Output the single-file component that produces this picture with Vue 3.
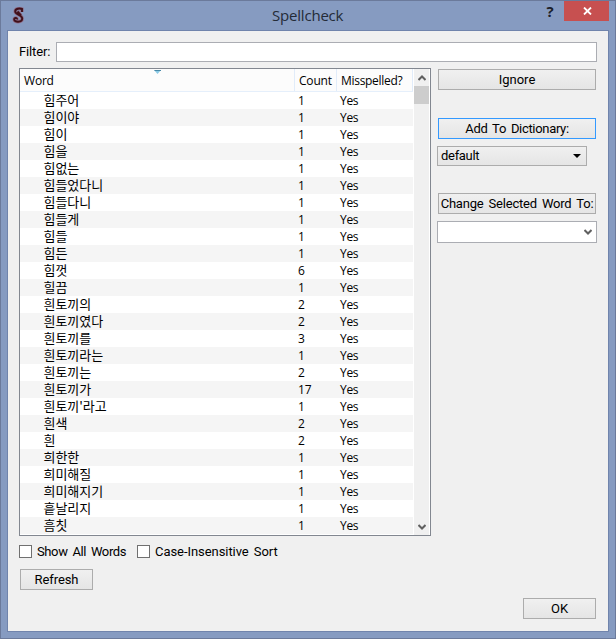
<script setup>
const rows = [
  ['힘주어', 1], ['힘이야', 1], ['힘이', 1], ['힘을', 1], ['힘없는', 1],
  ['힘들었다니', 1], ['힘들다니', 1], ['힘들게', 1], ['힘들', 1], ['힘든', 1],
  ['힘껏', 6], ['힐끔', 1], ['흰토끼의', 2], ['흰토끼였다', 2], ['흰토끼를', 3],
  ['흰토끼라는', 1], ['흰토끼는', 2], ['흰토끼가', 17], ["흰토끼'라고", 1], ['흰색', 2],
  ['흰', 2], ['희한한', 1], ['희미해질', 1], ['희미해지기', 1], ['흩날리지', 1], ['흠칫', 1],
]
</script>

<template>
  <div class="window">
    <header class="titlebar">
      <svg class="logo" width="14" height="17" viewBox="0 0 14 17">
        <path d="M10 5V2C8 1.200 3.200 1.200 3.200 4.500c0 3.200 7 3 7 7 0 4.300-8 4-8 .9 0-2 3.200-1.900 2.900.1M5.500 4.500l3.500 3.800" fill="none" stroke="#8c6c88" stroke-width="3.400" />
        <path d="M10 5V2C8 1.200 3.200 1.200 3.200 4.500c0 3.200 7 3 7 7 0 4.300-8 4-8 .9 0-2 3.200-1.900 2.900.1M5.500 4.500l3.500 3.800" fill="none" stroke="#40101a" stroke-width="1.900" />
      </svg>
      <h1 class="title">Spellcheck</h1>
      <span class="help">?</span>
      <button class="close" aria-label="Close">
        <svg width="9" height="8" viewBox="0 0 9 8"><path d="M1 .5l7 7M8 .5l-7 7" stroke="#fff" stroke-width="1.800" /></svg>
      </button>
    </header>

    <main class="client">
      <div class="filter">
        <label class="filter-label">Filter:</label>
        <input class="filter-input" type="text" />
      </div>

      <div class="body">
        <div class="table">
          <div class="grid">
            <div class="head">
              <span class="h-word">Word
                <svg class="sort" width="7" height="4" viewBox="0 0 7 4"><path d="M0 0h7L3.500 4z" fill="#8ccbe6" /><path d="M0 0h7v1H1z" fill="#4789a8" /></svg>
              </span>
              <span class="h-count">Count</span>
              <span class="h-miss">Misspelled?</span>
            </div>
            <div v-for="[word, count] in rows" :key="word" class="row">
              <span class="word">{{ word }}</span>
              <span class="count">{{ count }}</span>
              <span class="miss">Yes</span>
            </div>
          </div>
          <div class="scroll">
            <svg class="up" width="8" height="6" viewBox="0 0 8 6"><path d="M.5 5L4 1.500 7.500 5" fill="none" stroke="#606060" stroke-width="2" /></svg>
            <div class="thumb"></div>
            <svg class="down" width="8" height="6" viewBox="0 0 8 6"><path d="M.5 1L4 4.500 7.500 1" fill="none" stroke="#606060" stroke-width="2" /></svg>
          </div>
        </div>

        <aside class="side">
          <button class="btn ignore">Ignore</button>
          <button class="btn add">Add To Dictionary:</button>
          <div class="combo">
            <span class="default">default</span>
            <svg width="8" height="4" viewBox="0 0 8 4"><path d="M0 0h8L4 4z" fill="#000" /></svg>
          </div>
          <button class="btn change">Change Selected Word To:</button>
          <div class="edit">
            <svg width="8" height="6" viewBox="0 0 8 6"><path d="M.5 1L4 4.500 7.500 1" fill="none" stroke="#606060" stroke-width="2" /></svg>
          </div>
        </aside>
      </div>

      <div class="checks">
        <i class="box"></i><span class="show">Show All Words</span>
        <i class="box"></i><span class="case">Case-Insensitive Sort</span>
      </div>
      <button class="btn refresh">Refresh</button>
      <button class="btn ok">OK</button>
    </main>
  </div>
</template>

<style>
body { margin: 0; overflow: hidden; }
</style>

<style scoped>
* { box-sizing: border-box; }
.window {
  width: 616px; height: 639px; padding: 0 6px 6px; background: #869bc1;
  border: 1px solid #6b7a9b; color: #000;
  font: 13px/16px Roboto, "Noto Sans CJK KR", sans-serif;
  white-space: nowrap;
}
.titlebar { display: flex; height: 29px; }
.logo { margin: 6px 0 0 5px; }
.title {
  flex: 1; margin: 4px 0 0 246px; color: #242b38;
  font: 400 15px/21px "Open Sans", sans-serif; letter-spacing: -.2px;
}
.help { width: 18px; margin: 1px 5px 0 0; text-align: center; font: 700 15px/18px "Open Sans", sans-serif; color: #1c2029; }
.close {
  display: flex; align-items: center; justify-content: center; width: 45px; height: 20px;
  padding: 0 0 0 1px; border: 0; background: #c75050;
}
.client {
  display: flex; flex-direction: column; width: 602px; height: 602px; padding: 11px;
  border: 1px solid #7084ac; background: #f0f0f0;
}
.filter { display: flex; height: 20px; }
.filter-label { width: 37px; line-height: 20px; letter-spacing: -.15px; }
.filter-input { width: 541px; height: 20px; padding: 0; border: 1px solid #abadb3; background: #fff; outline: 0; }
.body { display: flex; height: 468px; margin-top: 6px; }
.table { display: flex; width: 412px; border: 1px solid #828790; background: #fff; font-family: "Open Sans", "Noto Sans CJK KR", sans-serif; font-size: 12px; }
.grid { width: 393px; }
.head { display: flex; height: 23px; line-height: 23px; background: #fcfcfc; border-bottom: 1px solid #e5effb; }
.head span { border-right: 1px solid #e1ecfa; }
.head .h-word { position: relative; width: 275px; padding-left: 4px; letter-spacing: -.2px; }
.sort { position: absolute; left: 134px; top: 1px; }
.head .h-count { width: 42px; padding-left: 4px; letter-spacing: -.2px; }
.head .h-miss { width: 76px; padding-left: 4px; letter-spacing: -.3px; }
.row { display: flex; width: 393px; height: 17px; line-height: 17px; }
.row:nth-child(odd) { background: #f5f5f5; }
.word { width: 278px; padding-left: 23.500px; font-family: "Noto Sans CJK KR", sans-serif; font-size: 13px; line-height: 15px; letter-spacing: -.05px; }
.count { width: 42px; }
.miss { letter-spacing: -.3px; }
.scroll { width: 15px; margin-left: 1px; background: #f0f0f0; display: flex; flex-direction: column; align-items: center; }
.up { margin-top: 6px; }
.thumb { width: 15px; height: 18px; margin-top: 5px; background: #cdcdcd; }
.down { margin: auto 0 5px; }
.side { width: 160px; margin-left: 6px; }
.btn {
  display: flex; align-items: center; justify-content: center; width: 158px; height: 21px;
  padding: 0; border: 1px solid #acacac; background: linear-gradient(#f0f0f0, #e5e5e5);
  color: #000; font: inherit; word-spacing: 2px;
}
.ignore { margin: 1px 0 28px 1px; }
.add { margin: 0 0 7px 1px; border-color: #3399ff; letter-spacing: -.32px; }
.combo {
  display: flex; align-items: center; justify-content: space-between; width: 150px; height: 20px;
  padding: 0 5px 0 3px; border: 1px solid #acacac; background: linear-gradient(#f0f0f0, #e5e5e5);
}
.default { letter-spacing: -.3px; }
.change { margin: 27px 0 7px 1px; letter-spacing: -.2px; }
.edit { display: flex; align-items: center; justify-content: flex-end; width: 160px; height: 22px; padding-right: 4px; border: 1px solid #abadb3; background: #fff; }
.checks { display: flex; align-items: center; height: 15px; margin-top: 8px; word-spacing: 2px; }
.box { width: 13px; height: 13px; margin-right: 5px; border: 1px solid #707070; background: #fff; }
.show { width: 100px; letter-spacing: -.38px; }
.case { letter-spacing: -.06px; }
.refresh { width: 73px; margin: 10px 0 0 1px; letter-spacing: -.1px; }
.ok { width: 73px; margin: 8px 1px 0 auto; }
</style>
